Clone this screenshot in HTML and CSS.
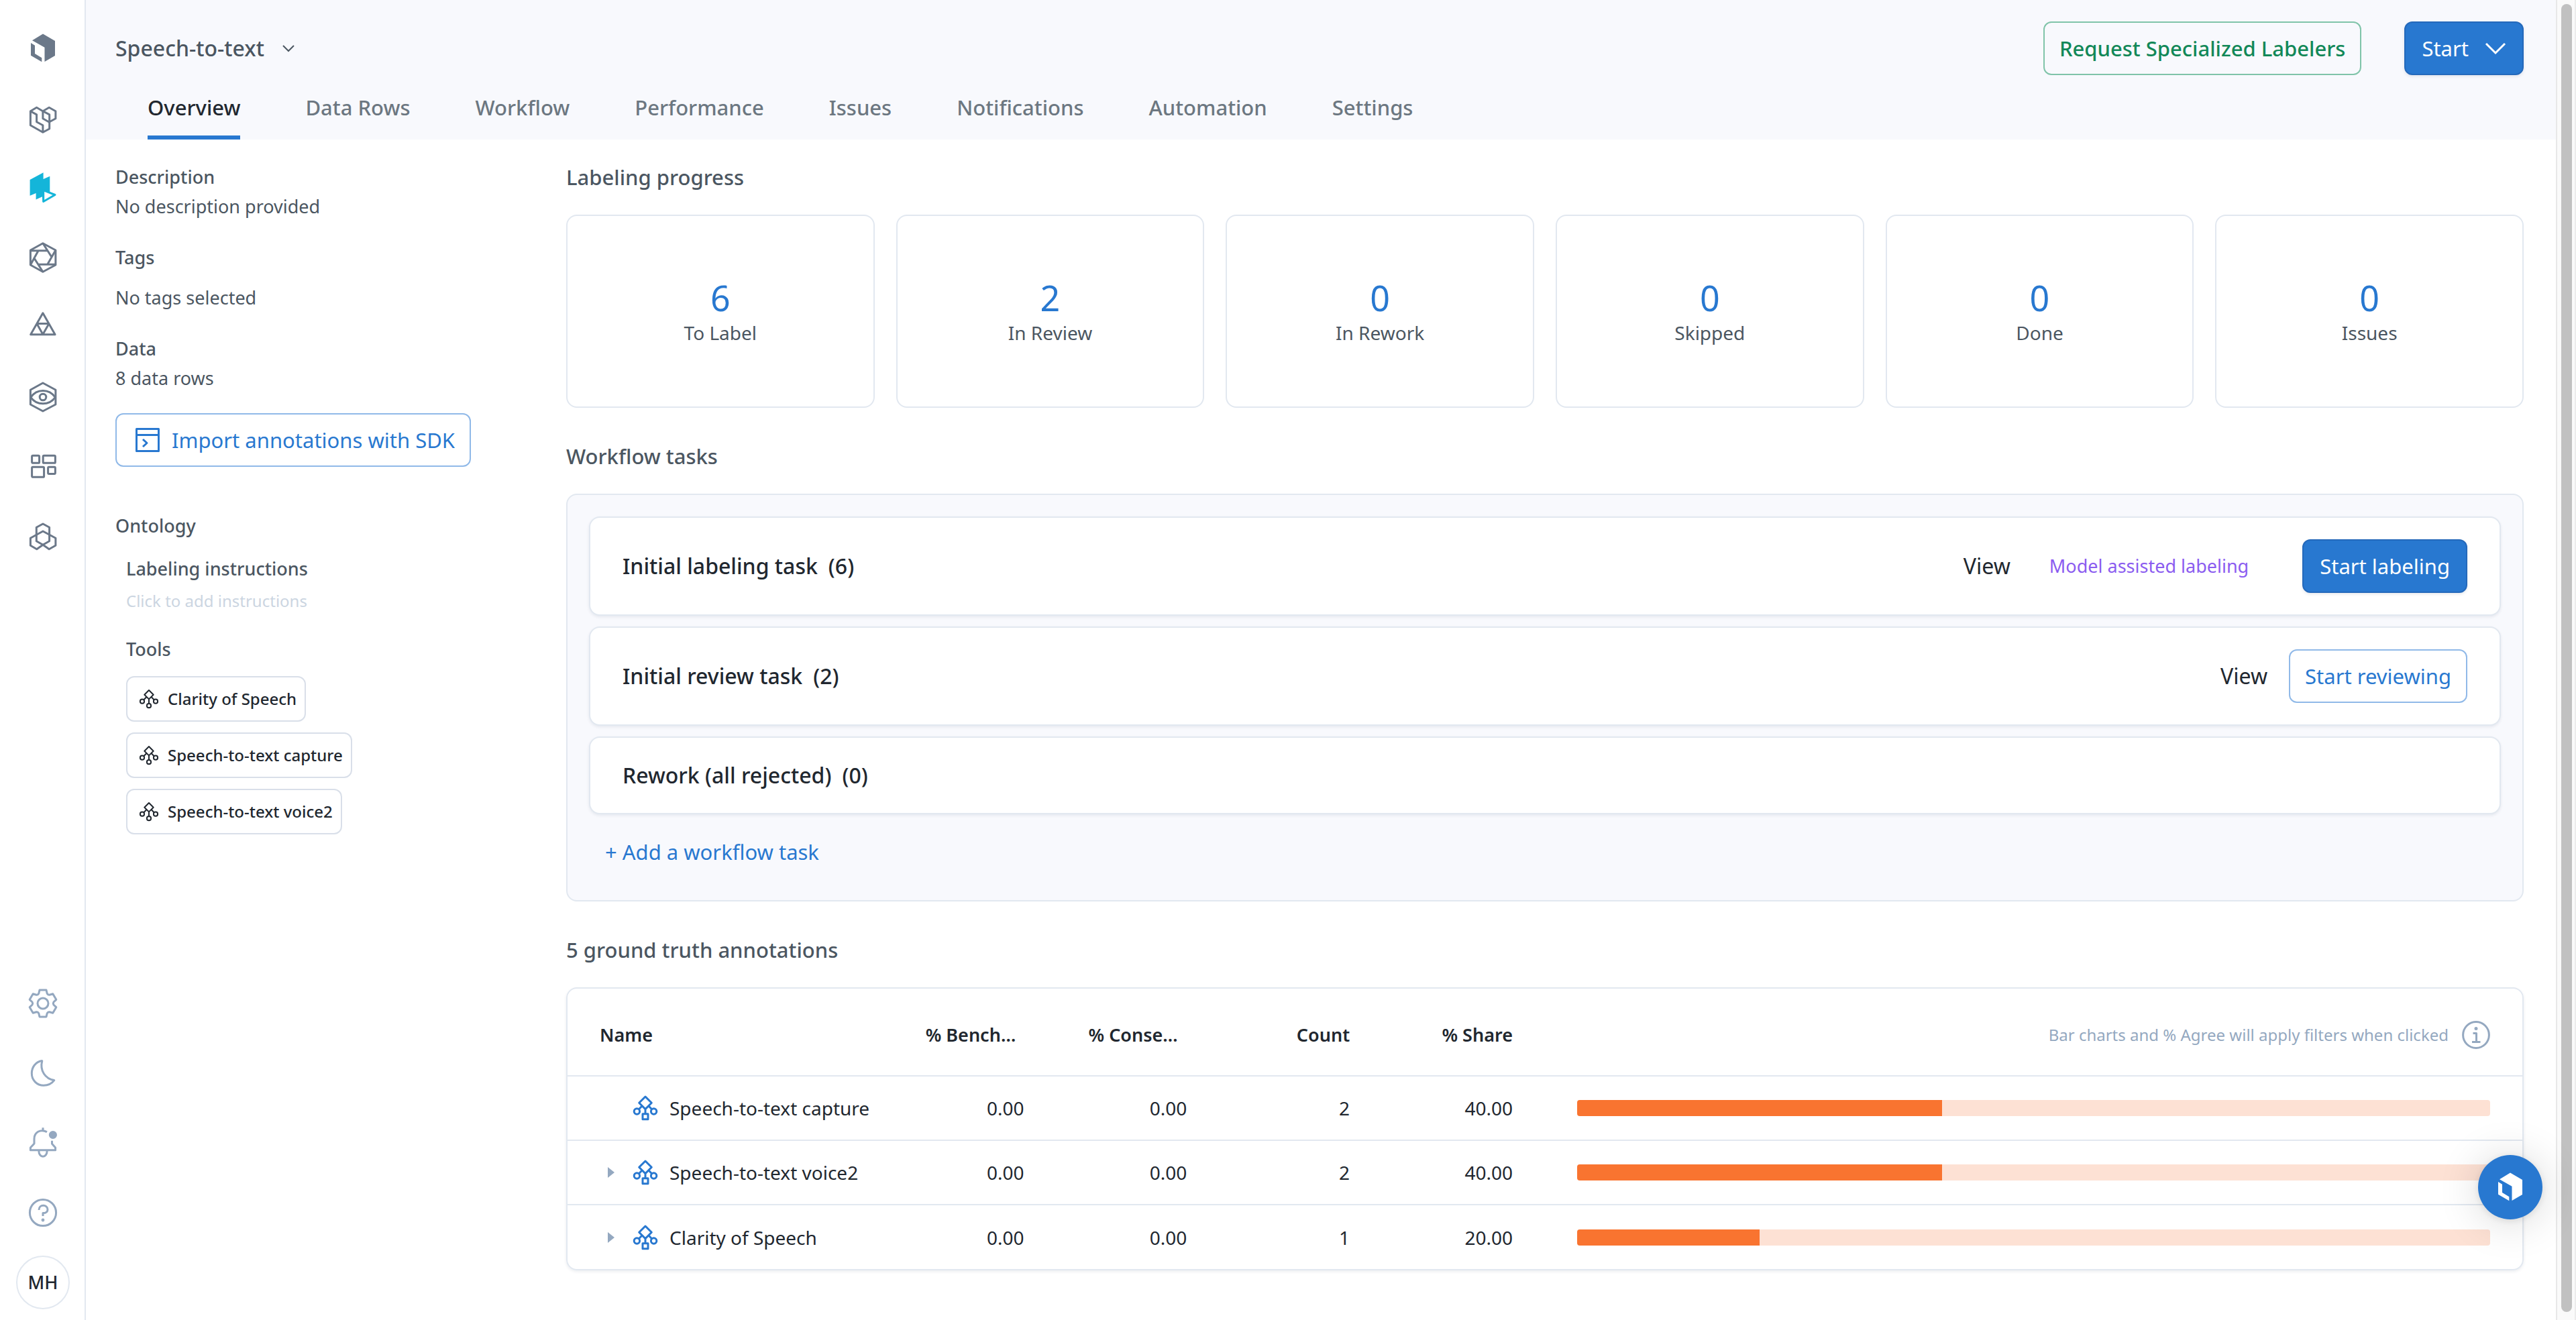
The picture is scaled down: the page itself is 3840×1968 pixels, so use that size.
FILE: index.html
```html
<!DOCTYPE html>
<html lang="en">
<head>
    <meta charset="UTF-8">
    <meta name="viewport" content="width=device-width, initial-scale=1.0">
    <title>Speech-to-text</title>
    <link rel="stylesheet" href="styles.css">
</head>
<body>
    <!-- shared icons -->
    <svg class="sprite" aria-hidden="true">
        <symbol id="logo" viewBox="0 0 48 48">
            <path d="M24 2.5L42 13V35L26.5 44V22.7L8 12.3Z"/>
            <path d="M6 16L12 19.8V32L22.3 38.2V44.3L6 34.7Z"/>
        </symbol>
        <symbol id="tree" viewBox="0 0 48 48">
            <path d="M24 7l9.3 9.3L24 25.6l-9.3-9.3zM24 25.6v6.9M19 21l-4.6 4.8M29 21l4.6 4.8M20 32.7h8v8h-8z"/>
            <circle cx="11.4" cy="29" r="4.2"/>
            <circle cx="36.6" cy="29" r="4.2"/>
        </symbol>
        <symbol id="tree-small" viewBox="0 0 40 40">
            <path d="M20 7l6.7 6.7L20 20.4l-6.7-6.7zM20 20.4v6.7M16 17.5l-3.6 3.8M24 17.5l3.6 3.8"/>
            <circle cx="10" cy="23.7" r="3.1"/>
            <circle cx="30" cy="23.7" r="3.1"/>
            <circle cx="20" cy="30.2" r="3.1"/>
        </symbol>
    </svg>

    <div class="app">
        <nav class="sidebar" aria-label="Main">
            <ul class="side-list">
                <li><a href="#" aria-label="Home"><svg class="icon filled"><use href="#logo"/></svg></a></li>
                <li><a href="#" aria-label="Catalog"><svg class="icon" viewBox="0 0 48 48">
                    <path d="M33.2 8.3L42.9 13.7V24.7L33.2 30L23.9 24.7V13.7Z"/>
                    <path d="M23.9 13.7L14.6 8.3L5.4 13.7V34.7L23.9 45.3L33.7 40V18.9L23.9 13.7M5.4 13.7L14.6 18.9V29.7L23.9 34.7V45.3"/>
                </svg></a></li>
                <li><a href="#" aria-label="Annotate" class="current"><svg class="icon" viewBox="0 0 48 48">
                    <path class="solid" d="M4.6 12L24.6 1.3V11L34.3 6.7V30L24 46L22.9 37.3L13.6 41.5V32L4.6 35.7Z"/>
                    <path class="hole" d="M24.7 27.6L42 34.5L24.7 44.5Z"/>
                </svg></a></li>
                <li><a href="#" aria-label="Model"><svg class="icon" viewBox="0 0 48 48">
                    <path d="M23.9 2.7L42.9 13V35L23.9 45.3L5.4 35V13Z"/>
                    <path d="M5.4 13.7H30.7M23.9 2.7L37.5 24M42.9 13L30.7 34.3M42.9 34.3H17.1M23.9 45.3L10.4 24M5.4 35L17.1 13.7"/>
                </svg></a></li>
                <li><a href="#" aria-label="Foundry"><svg class="icon" viewBox="0 0 48 48">
                    <path d="M23.9 2.7L42.1 34.7H5.7ZM14.9 18.6H33L23.9 34.4Z"/>
                </svg></a></li>
                <li><a href="#" aria-label="Monitor"><svg class="icon" viewBox="0 0 48 48">
                    <path d="M23.9 3L42.9 13.3V35L23.9 45L5.4 35V13.3Z"/>
                    <path d="M5.8 24.3C15 11.2 33 11.2 42.4 24.3C33 37 15 37 5.8 24.3Z"/>
                    <circle cx="24" cy="24" r="4.8"/>
                </svg></a></li>
                <li><a href="#" aria-label="Schema"><svg class="icon" viewBox="0 0 48 48">
                    <rect x="7.6" y="7.3" width="11" height="11" rx="1.4"/>
                    <rect x="24.2" y="7.3" width="18.2" height="11" rx="1.4"/>
                    <rect x="7.6" y="24.3" width="18" height="15" rx="1.4"/>
                    <rect x="31.6" y="24.3" width="10.8" height="10.2" rx="1.4"/>
                </svg></a></li>
                <li><a href="#" aria-label="Workspace"><svg class="icon" viewBox="0 0 48 48">
                    <path d="M24 5L33.6 10.3V30.7L24 36.3L14.3 30.7V10.3Z"/>
                    <path d="M24 16L42.9 26.3V37.3L33.2 42.7L24 36.3L14.8 42.7L5.4 37.3V26.3Z"/>
                </svg></a></li>
            </ul>
            <ul class="side-list muted">
                <li><a href="#" aria-label="Settings"><svg class="icon" viewBox="0 0 48 48">
                    <path transform="translate(24 24)" d="M-5-20H5L6.2-14.8Q7.3-12.6 9.7-12.7L14.8-14.3L19.8-5.7L15.9-2Q14.6 0 15.9 2L19.8 5.7L14.8 14.3L9.7 12.7Q7.3 12.6 6.2 14.8L5 20H-5L-6.2 14.8Q-7.3 12.6-9.7 12.7L-14.8 14.3L-19.8 5.7L-15.9 2Q-14.6 0-15.9-2L-19.8-5.7L-14.8-14.3L-9.7-12.7Q-7.3-12.6-6.2-14.8Z"/>
                    <circle cx="24" cy="24" r="8"/>
                </svg></a></li>
                <li><a href="#" aria-label="Dark mode"><svg class="icon" viewBox="0 0 48 48">
                    <path d="M22.8 5.6C13 7 7.3 15 7.3 24.3C7.3 34.5 15 42.2 25 42.2C32 42.2 37.5 39 40.8 34.6C27.5 32.5 19 20 22.8 5.6Z"/>
                </svg></a></li>
                <li><a href="#" aria-label="Notifications"><svg class="icon" viewBox="0 0 48 48">
                    <path d="M24 1.3V5.5M30 7.6C20 2.5 11 8.5 11 18V25L5.4 31V34.7H42.6V31L37.5 25.3V20.7M17.8 35.5C17.8 47 30.2 47 30.2 35.5"/>
                    <circle class="solid" cx="38.9" cy="12" r="4.6"/>
                </svg></a></li>
                <li><a href="#" aria-label="Help"><svg class="icon" viewBox="0 0 48 48">
                    <circle cx="24" cy="24" r="19.6"/>
                    <path d="M18 20C18 10.8 31.2 11.6 31 19.2C31 23 28.4 24.6 24 24.6V29"/>
                    <circle class="solid" cx="24" cy="35" r=".9"/>
                </svg></a></li>
                <li><button class="avatar" type="button">MH</button></li>
            </ul>
        </nav>

        <div class="page">
            <header class="header">
                <div class="header-top">
                    <button class="project" type="button">Speech-to-text
                        <svg class="chevron" viewBox="0 0 20 20"><path d="M2 6l8 8 8-8"/></svg>
                    </button>
                    <div class="header-actions">
                        <button class="btn green" type="button">Request Specialized Labelers</button>
                        <button class="btn primary" type="button">Start
                            <svg class="chevron big" viewBox="0 0 32 32"><path d="M2 9l14 14L30 9"/></svg>
                        </button>
                    </div>
                </div>
                <nav class="tabs" aria-label="Project">
                    <a href="#" class="active">Overview</a>
                    <a href="#">Data Rows</a>
                    <a href="#">Workflow</a>
                    <a href="#">Performance</a>
                    <a href="#">Issues</a>
                    <a href="#">Notifications</a>
                    <a href="#">Automation</a>
                    <a href="#">Settings</a>
                </nav>
            </header>

            <div class="columns">
                <aside class="details">
                    <section class="detail">
                        <h3>Description</h3>
                        <p>No description provided</p>
                    </section>
                    <section class="detail spaced">
                        <h3>Tags</h3>
                        <p>No tags selected</p>
                    </section>
                    <section class="detail">
                        <h3>Data</h3>
                        <p>8 data rows</p>
                    </section>
                    <button class="btn outline import" type="button">
                        <svg class="import-icon" viewBox="0 0 40 40"><path d="M3.5 3.5h33v33h-33zM3.5 12.5h33M13 19l6 5.5-6 5.5"/></svg>
                        Import annotations with SDK
                    </button>
                    <section class="ontology">
                        <h3>Ontology</h3>
                        <div class="ontology-body">
                            <h3>Labeling instructions</h3>
                            <button class="add-instructions" type="button">Click to add instructions</button>
                            <h3>Tools</h3>
                            <ul class="tools">
                                <li><svg class="tool-icon"><use href="#tree-small"/></svg>Clarity of Speech</li>
                                <li><svg class="tool-icon"><use href="#tree-small"/></svg>Speech-to-text capture</li>
                                <li><svg class="tool-icon"><use href="#tree-small"/></svg>Speech-to-text voice2</li>
                            </ul>
                        </div>
                    </section>
                </aside>

                <main class="main">
                    <section>
                        <h2>Labeling progress</h2>
                        <div class="cards">
                            <div class="card"><b>6</b><span>To Label</span></div>
                            <div class="card"><b>2</b><span>In Review</span></div>
                            <div class="card"><b>0</b><span>In Rework</span></div>
                            <div class="card"><b>0</b><span>Skipped</span></div>
                            <div class="card"><b>0</b><span>Done</span></div>
                            <div class="card"><b>0</b><span>Issues</span></div>
                        </div>
                    </section>

                    <section>
                        <h2>Workflow tasks</h2>
                        <div class="panel">
                            <div class="task">
                                <span class="task-name">Initial labeling task</span><span class="task-name">(6)</span>
                                <div class="task-actions">
                                    <a href="#" class="view">View</a>
                                    <a href="#" class="assisted">Model assisted labeling</a>
                                    <button class="btn primary" type="button">Start labeling</button>
                                </div>
                            </div>
                            <div class="task">
                                <span class="task-name">Initial review task</span><span class="task-name">(2)</span>
                                <div class="task-actions">
                                    <a href="#" class="view">View</a>
                                    <button class="btn outline" type="button">Start reviewing</button>
                                </div>
                            </div>
                            <div class="task">
                                <span class="task-name">Rework (all rejected)</span><span class="task-name">(0)</span>
                            </div>
                            <a href="#" class="add-task">+ Add a workflow task</a>
                        </div>
                    </section>

                    <section>
                        <h2>5 ground truth annotations</h2>
                        <div class="table-box">
                            <table>
                                <colgroup>
                                    <col class="col-name"><col class="col-num"><col class="col-num"><col class="col-num"><col class="col-num"><col>
                                </colgroup>
                                <thead>
                                    <tr>
                                        <th class="name">Name</th>
                                        <th class="cut">% Benchmark</th>
                                        <th class="cut">% Consensus</th>
                                        <th>Count</th>
                                        <th>% Share</th>
                                        <th class="hint">
                                            <div class="hint-row">
                                                Bar charts and % Agree will apply filters when clicked
                                                <svg class="info" viewBox="0 0 42 42"><circle cx="21" cy="21" r="19.4"/><path d="M16.5 18.5h5V31M15 31.5h12.5"/><circle class="solid" cx="21" cy="11.5" r="1"/></svg>
                                            </div>
                                        </th>
                                    </tr>
                                </thead>
                                <tbody>
                                    <tr>
                                        <td class="name"><div class="name-row"><span class="arrow-slot"></span><svg class="icon blue"><use href="#tree"/></svg>Speech-to-text capture</div></td>
                                        <td>0.00</td>
                                        <td>0.00</td>
                                        <td>2</td>
                                        <td>40.00</td>
                                        <td><div class="bar"><div class="bar-fill" style="width: 40%"></div></div></td>
                                    </tr>
                                    <tr>
                                        <td class="name"><div class="name-row"><span class="arrow-slot"><svg class="arrow" viewBox="0 0 10 16"><path d="M0 0l10 8-10 8z"/></svg></span><svg class="icon blue"><use href="#tree"/></svg>Speech-to-text voice2</div></td>
                                        <td>0.00</td>
                                        <td>0.00</td>
                                        <td>2</td>
                                        <td>40.00</td>
                                        <td><div class="bar"><div class="bar-fill" style="width: 40%"></div></div></td>
                                    </tr>
                                    <tr>
                                        <td class="name"><div class="name-row"><span class="arrow-slot"><svg class="arrow" viewBox="0 0 10 16"><path d="M0 0l10 8-10 8z"/></svg></span><svg class="icon blue"><use href="#tree"/></svg>Clarity of Speech</div></td>
                                        <td>0.00</td>
                                        <td>0.00</td>
                                        <td>1</td>
                                        <td>20.00</td>
                                        <td><div class="bar"><div class="bar-fill" style="width: 20%"></div></div></td>
                                    </tr>
                                </tbody>
                            </table>
                        </div>
                    </section>
                </main>
            </div>
        </div>

        <div class="scroll-track"><div class="scroll-thumb"></div></div>
    </div>

    <button class="chat" type="button" aria-label="Support chat">
        <svg class="icon filled"><use href="#logo"/></svg>
    </button>
</body>
</html>
```
FILE: styles.css
```css
* {
    box-sizing: border-box;
}

body {
    margin: 0;
    background: #fff;
    color: #21272f;
    font-family: "Noto Sans", "Open Sans", sans-serif;
    font-size: 28px;
    line-height: 44px;
}

h2, h3, p, ul {
    margin: 0;
    padding: 0;
    list-style: none;
}

a {
    color: inherit;
    text-decoration: none;
}

button {
    margin: 0;
    padding: 0;
    border: none;
    background: none;
    color: inherit;
    font: inherit;
    cursor: pointer;
}

svg {
    display: block;
    flex-shrink: 0;
    fill: none;
    stroke: currentColor;
    stroke-width: 3;
    stroke-linejoin: round;
}

.solid {
    fill: currentColor;
}

.sprite {
    position: absolute;
    width: 0;
    height: 0;
}

.icon {
    width: 48px;
    height: 48px;
}

.filled {
    fill: currentColor;
    stroke: none;
}

.app {
    display: flex;
    height: 100vh;
    overflow: hidden;
}

/* Left icon bar */
.sidebar {
    flex: 0 0 128px;
    min-width: 0;
    display: flex;
    flex-direction: column;
    justify-content: space-between;
    padding: 20px 0 4px;
    border-right: 2px solid #e2e8f0;
    color: #6b7889;
}

.side-list li {
    display: flex;
    align-items: center;
    justify-content: center;
    width: 128px;
    height: 104px;
}

.muted {
    color: #94a8c0;
}

.current {
    color: #14b5d9;
}

.current .solid {
    stroke: none;
}

.hole {
    fill: #fff;
}

.avatar {
    width: 80px;
    height: 80px;
    border: 2px solid #e2e8f0;
    border-radius: 50%;
    color: #21272f;
    font-size: 27px;
    font-weight: 500;
}

/* Header */
.page {
    flex: 1;
    min-width: 0;
}

.header {
    padding: 32px 48px 0 44px;
    background: #f8f9fd;
}

.header-top {
    display: flex;
    justify-content: space-between;
    align-items: center;
}

.project {
    display: flex;
    align-items: center;
    gap: 26px;
    color: #4b5661;
    font-size: 32px;
    font-weight: 500;
}

.chevron {
    width: 20px;
    height: 20px;
    stroke-width: 2;
    stroke-linejoin: miter;
}

.big {
    width: 32px;
    height: 32px;
    stroke-width: 3;
}

.header-actions {
    display: flex;
    gap: 64px;
}

.btn {
    display: flex;
    align-items: center;
    gap: 24px;
    height: 80px;
    padding: 0 22px;
    border: 2px solid;
    border-radius: 12px;
    font-size: 31px;
    white-space: nowrap;
}

.green {
    border-color: #80c4a9;
    color: #128858;
    font-weight: 500;
}

.primary {
    padding: 0 24px;
    border-color: #2469bb;
    background: #2878d0;
    color: #fff;
    box-shadow: 0 2px 4px rgba(16, 42, 80, 0.1);
}

.outline {
    border-color: #90b9e8;
    background: #fff;
    color: #2878d0;
}

.tabs {
    display: flex;
    gap: 97px;
    padding-left: 48px;
    color: #6c7781;
    font-size: 31px;
    font-weight: 500;
    line-height: 48px;
}

.tabs a {
    padding: 24px 0 18px;
    border-bottom: 6px solid transparent;
}

.tabs .active {
    border-color: #2878d0;
    border-radius: 2px 2px 0 0;
    color: #21272f;
}

/* Left column */
.columns {
    display: flex;
    gap: 64px;
    padding: 32px 48px 48px 44px;
}

.details {
    flex: 0 0 608px;
    padding-top: 2px;
    color: #4b5661;
    font-size: 27px;
}

h3 {
    font-size: 27px;
    font-weight: 500;
}

.detail {
    margin-bottom: 32px;
}

.spaced p {
    margin-top: 16px;
}

.import {
    gap: 16px;
    margin-top: -2px;
    padding-left: 26px;
}

.import-icon {
    width: 40px;
    height: 40px;
}

.ontology {
    margin-top: 66px;
}

.ontology-body {
    margin-top: 20px;
    padding-left: 16px;
}

.add-instructions {
    display: block;
    margin: 8px 0 32px;
    color: #cbd5e1;
    font-size: 24px;
    line-height: 36px;
}

.tools {
    display: flex;
    flex-direction: column;
    align-items: flex-start;
    gap: 16px;
    margin-top: 18px;
}

.tools li {
    display: flex;
    align-items: center;
    gap: 8px;
    height: 68px;
    padding: 0 12px;
    border: 2px solid #d9dfe9;
    border-radius: 12px;
    color: #21272f;
    font-size: 24px;
    font-weight: 500;
}

.tool-icon {
    width: 40px;
    height: 40px;
    stroke-width: 2;
}

/* Main column */
.main {
    flex: 1;
    min-width: 0;
    display: flex;
    flex-direction: column;
    gap: 48px;
}

h2 {
    margin-bottom: 32px;
    color: #4b5661;
    font-size: 31px;
    font-weight: 500;
    line-height: 48px;
}

.cards {
    display: grid;
    grid-template-columns: repeat(6, 1fr);
    gap: 32px;
}

.card {
    display: flex;
    flex-direction: column;
    align-items: center;
    justify-content: center;
    height: 288px;
    border: 2px solid #e2e8f0;
    border-radius: 16px;
    color: #4b5661;
    line-height: 40px;
}

.card b {
    color: #2878d0;
    font-size: 52px;
    font-weight: 400;
    line-height: 64px;
}

.panel {
    display: flex;
    flex-direction: column;
    gap: 16px;
    padding: 32px 32px 48px;
    border: 2px solid #e2e8f0;
    border-radius: 16px;
    background: #f8f9fd;
}

.task {
    display: flex;
    align-items: center;
    gap: 16px;
    padding: 32px 48px;
    border: 2px solid #e2e8f0;
    border-radius: 16px;
    background: #fff;
    box-shadow: 0 2px 4px rgba(16, 42, 80, 0.08);
    font-size: 32px;
    line-height: 48px;
}

.task-name {
    font-weight: 500;
}

.task-actions {
    display: flex;
    align-items: center;
    gap: 32px;
    margin-left: auto;
}

.assisted {
    margin: 0 48px 0 26px;
    color: #8b5cf0;
    font-size: 27px;
}

.add-task {
    align-self: flex-start;
    margin-top: 16px;
    padding-left: 24px;
    color: #2878d0;
    font-size: 31px;
    line-height: 48px;
}

/* Annotations table */
.table-box {
    border: 2px solid #e2e8f0;
    border-radius: 16px;
    box-shadow: 0 2px 4px rgba(16, 42, 80, 0.08);
}

table {
    width: 100%;
    table-layout: fixed;
    border-collapse: collapse;
}

.col-name {
    width: 16.6667%;
}

.col-num {
    width: 8.3333%;
}

th {
    height: 130px;
    padding: 8px 48px 0;
    font-size: 27px;
    font-weight: 600;
    text-align: right;
    white-space: nowrap;
}

.cut {
    overflow: hidden;
    text-overflow: ellipsis;
    text-align: left;
}

.name {
    text-align: left;
}

.hint {
    color: #94a8c0;
    font-size: 24px;
    font-weight: 400;
}

.hint-row {
    display: flex;
    align-items: center;
    justify-content: flex-end;
    gap: 20px;
}

.info {
    width: 42px;
    height: 42px;
}

td {
    height: 96px;
    padding: 0 48px;
    border-top: 2px solid #e2e8f0;
    text-align: right;
}

td.name {
    padding-right: 0;
}

.name-row {
    display: flex;
    align-items: center;
    gap: 12px;
    white-space: nowrap;
}

.arrow-slot {
    flex: 0 0 32px;
    padding-left: 12px;
}

.arrow {
    width: 10px;
    height: 16px;
    fill: #94a8c0;
    stroke: none;
}

.blue {
    color: #2878d0;
}

.bar {
    height: 24px;
    border-radius: 4px;
    background: #fde1d4;
    overflow: hidden;
}

.bar-fill {
    height: 100%;
    background: #f97430;
}

/* Page scroll bar */
.scroll-track {
    flex: 0 0 30px;
    padding: 6px 4px 6px 6px;
    border-left: 2px solid #e8e8e8;
    border-right: 2px solid #ececec;
    background: #fafafa;
}

.scroll-thumb {
    width: 16px;
    height: 99.7%;
    border-radius: 8px;
    background: #c1c1c1;
}

.chat {
    position: fixed;
    right: 50px;
    bottom: 150px;
    display: flex;
    align-items: center;
    justify-content: center;
    width: 96px;
    height: 96px;
    border-radius: 50%;
    background: #2878d0;
    color: #fff;
    box-shadow: 0 2px 12px rgba(0, 0, 0, 0.1), 0 4px 64px rgba(0, 0, 0, 0.16);
}
```
